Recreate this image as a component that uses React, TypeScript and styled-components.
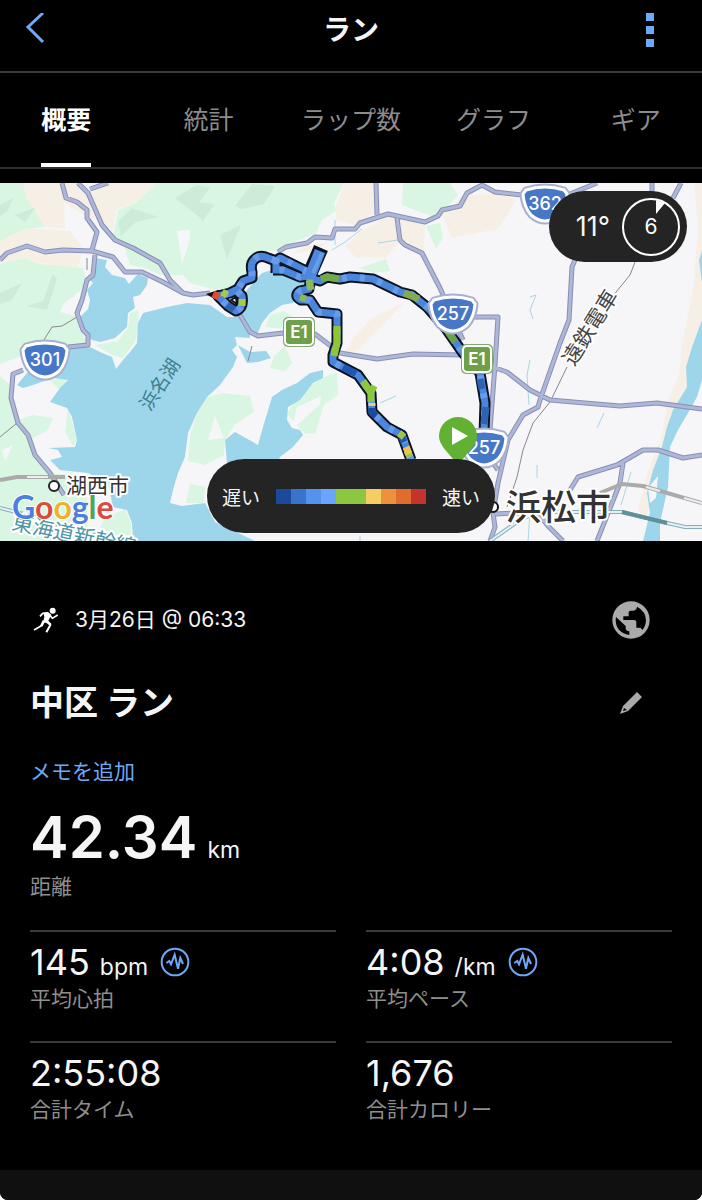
import React from "react";
import styled, { createGlobalStyle } from "styled-components";

const GlobalStyle = createGlobalStyle`
  * {
    box-sizing: border-box;
  }
  body {
    margin: 0;
    background: #fff;
    font-family: Inter, "Noto Sans CJK JP", sans-serif;
  }
  button {
    padding: 0;
    border: 0;
    background: none;
    color: inherit;
    font: inherit;
    cursor: pointer;
  }
`;

const Page = styled.div`
  display: flex;
  flex-direction: column;
  min-height: 100vh;
  overflow: hidden;
  border-radius: 0 0 8px 8px;
  background: #000;
  color: #f5f5f5;
`;

const Header = styled.header`
  display: grid;
  grid-template-columns: 1fr auto 1fr;
  align-items: center;
  height: 73px;
  padding: 0 47px 11px 25px;
  border-bottom: 2px solid #3b3b3b;
`;

const HeaderTitle = styled.h1`
  margin: 0;
  padding-left: 22px;
  font-size: 28px;
  font-weight: 700;
  line-height: 40px;
`;

const IconButton = styled.button`
  display: flex;
  color: ${(props) => props.color || "#6ea8f7"};
`;

const MenuButton = styled(IconButton)`
  justify-self: end;
`;

const Tabs = styled.nav`
  display: grid;
  grid-template-columns: repeat(5, 1fr);
  margin: 0 -5px;
  height: 96px;
  border-bottom: 2px solid #2f2f2f;
`;

const Tab = styled.button<{ $active?: boolean }>`
  && {
    justify-self: center;
    border-top: 4px solid transparent;
    border-bottom: 4px solid ${(props) => (props.$active ? "#fff" : "transparent")};
    color: ${(props) => (props.$active ? "#fff" : "#8c8c8c")};
    font-size: 25px;
    font-weight: ${(props) => (props.$active ? 700 : 400)};
    line-height: 36px;
    white-space: nowrap;
  }
`;

const MapPanel = styled.section`
  position: relative;
  margin-top: 14px;
  overflow: hidden;
  background: #f6f6f8;
`;

const MapSvg = styled.svg`
  display: block;
  width: 100%;
  height: auto;
`;

const Weather = styled.div`
  position: absolute;
  top: 8px;
  right: 15px;
  display: flex;
  align-items: center;
  justify-content: flex-end;
  gap: 11px;
  width: 138px;
  height: 71px;
  padding-right: 6px;
  border-radius: 36px;
  background: #242424;
  font-size: 27px;
`;

const Legend = styled.div`
  position: absolute;
  bottom: 8px;
  left: 50%;
  display: flex;
  align-items: center;
  justify-content: center;
  gap: 16px;
  width: 288px;
  height: 74px;
  border-radius: 37px;
  background: #242424;
  font-size: 19px;
  transform: translateX(-50%);
`;

const Scale = styled.div`
  display: flex;
`;

const Swatch = styled.span<{ $color: string }>`
  width: 15px;
  height: 15px;
  background: ${(props) => props.$color};
`;

const Summary = styled.main`
  flex: 1;
  padding: 56px 30px 0;
`;

const Row = styled.div`
  display: flex;
  align-items: center;
  justify-content: space-between;
  padding-right: 18px;
`;

const TitleRow = styled(Row)`
  margin-top: 36px;
  padding-right: 29px;
`;

const ActivityDate = styled.div`
  display: flex;
  align-items: center;
  gap: 16px;
  padding-left: 3px;
  font-size: 21px;
  line-height: 30px;
`;

const ActivityName = styled.h2`
  margin: 0;
  font-size: 34px;
  font-weight: 700;
  line-height: 48px;
`;

const MemoLink = styled.a`
  display: block;
  margin-top: 29px;
  color: #6ea8f7;
  font-size: 21px;
  line-height: 32px;
  text-decoration: none;
`;

const Distance = styled.div`
  height: 142px;
  padding-top: 14px;
`;

const DistanceValue = styled.div`
  font-size: 58px;
  font-weight: 600;
  line-height: 70px;
`;

const Unit = styled.span`
  margin-left: 10px;
  font-size: 23px;
  font-weight: 400;
  line-height: 1;
`;

const Label = styled.div`
  color: #8e8e8e;
  font-size: 21px;
  line-height: 30px;
`;

const Stats = styled.div`
  display: grid;
  grid-template-columns: 1fr 1fr;
  column-gap: 30px;
`;

const Stat = styled.div`
  height: 111px;
  padding-top: 8px;
  border-top: 2px solid #3b3b3b;
`;

const StatValue = styled.div`
  display: flex;
  align-items: center;
  gap: 12px;
  font-size: 36px;
  line-height: 44px;
`;

const Footer = styled.footer`
  height: 30px;
  background: #101010;
`;

const legendColors = [
  "#1b4a9c",
  "#3873cc",
  "#5393ef",
  "#69a5fa",
  "#8dc63f",
  "#8dc63f",
  "#f4cd63",
  "#ee913d",
  "#e06d2e",
  "#c6322d",
];

const tabs = ["概要", "統計", "ラップ数", "グラフ", "ギア"];

const stats = [
  { value: "145", unit: "bpm", label: "平均心拍", pulse: true },
  { value: "4:08", unit: "/km", label: "平均ペース", pulse: true },
  { value: "2:55:08", label: "合計タイム" },
  { value: "1,676", label: "合計カロリー" },
];

const greens = [
  "M0 183H23L27 200 45 227 25 229 8 237 0 242Z",
  "M0 264 25 258 40 264 83 268 86 282 78 294 64 303 60 312 76 316 82 332 88 346 60 350 40 349 0 364Z",
  "M157 183H344L334 203 336 211 322 220 316 233 290 244 278 250 258 252 250 262 247 277 236 288 215 290 190 283 183 275 160 275 145 268 130 265 125 248 113 237 118 210 135 203Z",
  "M130 313 138 310 139 323 135 342 123 358 112 355 95 345 118 341 128 328Z",
  "M403 183H450L458 195 445 210 436 218 402 205Z",
  "M426 226 440 223 443 238 436 249Z",
  "M0 376 10 385 12 400 18 420 33 415 53 418 47 431 33 438 38 460 56 474 86 475 88 541H0Z",
  "M50 380 68 378 60 391Z",
  "M68 408 77 440 73 446 65 432Z",
  "M125 509 131 523V541H94L105 518Z",
  "M207 397 223 393 250 396 254 412 235 424 225 440 224 455 205 465 188 461 190 436 198 411Z",
  "M287 414 300 393 322 378 337 372 338 395 324 405 315 434 304 433Z",
  "M270 315 284 311 300 322 287 329 265 327Z",
  "M274 356 285 346 292 363 285 371 270 368Z",
  "M360 268 386 259 390 271 374 273Z",
  "M190 484 205 487 204 503H186Z",
  "M134 533 153 532 150 541H134Z",
];

const shades = [
  "M0 205 13 198 8 211 0 216Z",
  "M15 215 36 207 25 222Z",
  "M118 222 132 208 158 217 136 222 121 236Z",
  "M175 198 197 185 210 188 199 202 215 204 203 220Z",
  "M235 206 252 184 275 186 264 204 242 209Z",
  "M220 235 241 225 227 259Z",
  "M195 210 208 203 203 222Z",
  "M0 293 22 283 12 300 0 304Z",
  "M26 306 43 301 53 274 57 279 47 310Z",
];

const beiges = [
  "M22 183H78L88 195 95 219 84 215 64 203 65 229 43 226 27 202Z",
  "M0 242 25 228 70 231 83 248 78 268 40 263 25 258 0 264Z",
  "M100 183H157L134 203 117 209 113 230 102 224 91 193Z",
  "M344 183 375 183 374 213 355 225 336 220 336 206Z",
  "M304 247 330 242 312 250 290 255Z",
  "M360 232 388 216 425 225 424 251 400 242 386 257 356 258 345 246Z",
  "M442 215 465 195 493 194 517 199 498 229 452 238Z",
  "M372 318 405 302 358 350 344 355 353 338Z",
  "M702 183 703 360 680 405 665 440 656 486 645 520 638 510 648 470 661 440 668 400 679 375 682 345 693 290 698 230 694 183Z",
];

const waters = [
  "M95 258 107 260 105 267 112 275 125 278 129 284 138 274 148 278 147 285 140 295 133 297 135 308 128 313 127 327 115 338 100 342 92 340 87 335 82 325 80 313 88 308 90 300 87 290 93 283 90 280Z",
  "M66 349 90 347 100 352 112 357 116 369 123 360 130 352 137 343 138 323 143 313 167 307 187 303 210 305 227 317 240 317 250 332 250 338 235 337 237 345 232 350 237 357 233 367 220 385 207 397 197 413 188 433 185 457 178 473 173 490 170 503 182 506 205 503 215 522 255 541H133L132 523 127 510 113 507 108 482 88 473 60 470 50 460 62 457 58 450 48 448 75 447 77 440 72 417 67 408 50 402 60 388 68 380 53 378 33 385 23 388 17 385 27 373Z",
  "M253 283 262 273 272 270 300 280 309 281 297 293 293 303 282 305 270 313 262 323 257 335 250 332 243 320 243 295Z",
  "M238 345 250 352 266 351 271 358 258 362 247 363Z",
  "M323 370V378L313 383 300 400 288 407 287 420 292 428 300 430 303 435 293 447 280 457 272 475H228L225 440 235 432 258 445 263 427 272 397 282 390 297 383 310 373Z",
  "M703 247 699 260 703 290ZM702 320 692 347 686 367 687 387 673 410 667 427 662 447 653 470 647 493 650 513 643 541H660V523L668 487 670 447 678 430 688 413 697 397 702 380Z",
];

const whites = [
  "M177 231 190 230 190 240 182 263Z",
  "M113 263 122 259 132 273 126 277 116 271Z",
  "M78 292 90 300 88 309 80 317 62 310Z",
  "M648 488 658 476 656 498 650 503Z",
  "M297 407 321 396 320 404 302 421 292 428Z",
  "M208 440 215 416 224 438Z",
  "M2 450 13 445 5 461Z",
];

const roads = [
  "M0 260 7 253 27 246 45 252 63 250 92 251 113 257 125 272 142 272 163 282 183 293 193 295 210 293",
  "M78 183 88 193 102 225 115 240 133 248 160 263 170 280 183 293",
  "M90 189 108 183",
  "M62 183 66 198 77 202 87 210V218L97 232 92 250",
  "M95 255 93 275 87 280 82 300 77 313 83 330 88 335V345L68 347",
  "M23 370 13 374 11 398 18 423 28 435 35 455 50 473 64 495",
  "M278 252 286 247 307 243 315 237 332 238 335 229H355L360 223 388 214 425 222 438 216 442 210 460 206 467 193 482 185 495 192 522 195",
  "M376 183 377 215",
  "M397 218 400 240 405 245 422 253 440 288 463 340",
  "M240 315 250 332 258 336 283 333 315 334 340 353 377 359 413 354 463 355",
  "M470 317H498L495 365 490 430 493 463 498 470",
  "M575 260 572 267 569 320 560 343 540 400 538 407 523 415 508 440 498 483 493 513 495 527 490 541",
  "M487 365 507 372 530 390 550 400 620 406 657 403 702 409",
  "M570 490 578 477 617 465 643 450H658L683 458 702 455",
  "M623 463 620 483 597 541",
  "M652 183V200M681 183 673 198M597 183 570 194",
  "M495 514 537 512 548 526 563 541",
];

const rails = [
  "M77 317 62 326 52 327 42 343",
  "M635 262 630 275 612 297",
  "M567 367 550 402 533 423 523 450 517 477 507 507",
  "M87 258 87 270M0 437 17 423M252 346 248 361",
];

const streams = [
  "M335 220V245M332 250 345 242 362 229M378 243 398 240M380 403 396 396M530 297 536 295 530 310 533 319M530 360 527 375 529 405M604 413 597 428M537 465V478M631 472 621 505M360 536V541M530 512 528 541",
];

const routePath =
  "M484 434 485 403 480 373 463 353 447 330 427 307 412 295 400 292 373 279 350 277 340 279 327 277 320 281 310 278M411 460 402 435 387 427 372 412 371 393 363 382 358 375 333 362 333 355 337 343V314L318 312 310 300 301 300Q293 296 300 291L309 289 311 276 300 277 283 270 273 270M308 272 280 258 276 261 268 258Q259 254 254 260 250 264 252 272V278L243 281 238 289 230 293 218 296 228 306 236 311Q244 308 242 296L236 290M276 258V273";

const routeParts = [
  { d: "M339 279 327 277 321 279", color: "#72aa4a" },
  { d: "M419 299 404 293", color: "#80ab4f" },
  { d: "M455 342 447 330", color: "#6aa04f" },
  { d: "M311 290 309 280M300 297 306 299", color: "#8bb85a" },
  { d: "M337 326V343L334 356", color: "#92c534" },
  { d: "M363 381 371 393V402", color: "#8dc63f" },
  { d: "M372 403V406", color: "#f4cd63" },
  { d: "M372 408V413L376 416", color: "#194a9e" },
  { d: "M356 374 343 367M401 435 404 442", color: "#2056b0" },
  { d: "M399 433 404 437M410 457 407 451", color: "#9fc549" },
  { d: "M409 454 406 447", color: "#eac556" },
  { d: "M242 306 242 299M222 292 227 295", color: "#a5cd3f" },
  { d: "M213 294 219 297", color: "#df4c2e" },
  { d: "M227 305 234 310M486 407 484 424M480 379 482 389", color: "#2e63b4" },
];

function Shield({ x, y, label }: { x: number; y: number; label: string }) {
  const shape =
    "M-19 -14 Q0 -20 19 -14 L22 -10 Q21 3 14 11 Q7 17 0 17 Q-7 17 -14 11 Q-21 3 -22 -10Z";
  return (
    <g transform={`translate(${x} ${y})`} strokeLinejoin="round">
      <path d={shape} fill="#a8b0d0" stroke="#a8b0d0" strokeWidth="7" />
      <path d={shape} fill="#4778c7" stroke="#fff" strokeWidth="3" />
      <text y="6" textAnchor="middle" fill="#fff" fontSize="18" fontWeight="500">
        {label}
      </text>
    </g>
  );
}

function Expressway({ x, y }: { x: number; y: number }) {
  return (
    <g transform={`translate(${x} ${y})`}>
      <rect x="-16" y="-15" width="32" height="30" rx="5" fill="#86a973" />
      <rect x="-14" y="-13" width="28" height="26" rx="4" fill="#6f9f48" stroke="#fff" strokeWidth="2" />
      <text y="6" textAnchor="middle" fill="#fff" fontSize="17" fontWeight="600">
        E1
      </text>
    </g>
  );
}

function CourseMap() {
  return (
    <MapSvg viewBox="0 183 702 358" role="img" aria-label="コースマップ">
      <path d={beiges.join("")} fill="#f6efe6" />
      <path d={greens.join("")} fill="#d9f6e2" />
      <path d={shades.join("")} fill="#cdecd8" />
      <path d={waters.join("")} fill="#9dd6ea" />
      <path d={whites.join("")} fill="#f6f6f8" />
      <path d={streams.join("")} fill="none" stroke="#a8d6e6" strokeWidth="1" />
      <path d={rails.join("")} fill="none" stroke="#888" strokeWidth="1" />
      <g fill="none" strokeLinejoin="round">
        <path d={roads.join("")} stroke="#888fb8" strokeWidth="5" />
        <path d={roads.join("")} stroke="#aeb7d6" strokeWidth="3" />
        <path d="M0 480 17 477H65M600 493 622 484 643 486 702 503" stroke="#aaa" strokeWidth="4" />
        <path d="M27 477H48M646 487 660 491M684 498 702 503" stroke="#eee" strokeWidth="2" />
        <path d="M490 541 520 520 537 512H622L667 523 685 527H702M0 508 20 513 60 525 120 541" stroke="#86aeb9" strokeWidth="4" />
        <path d="M490 541 520 520 537 512H622M667 523 685 527H702M0 508 20 513" stroke="#e0f2f5" strokeWidth="2" />
        <path d="M622 512 667 523" stroke="#5d9299" strokeWidth="4" />
      </g>

      <g fill="none" strokeLinejoin="round">
        <path d="M206 294 218 290 228 294 221 303Z" fill="#111" />
        <path d={routePath} stroke="#0c1220" strokeWidth="11" />
        <path d="M308 278 321 248" stroke="#0c1220" strokeWidth="15" />
        <path d={routePath} stroke="#4b86dd" strokeWidth="7" />
        <path d={routePath} stroke="#669ce9" strokeWidth="7" strokeDasharray="5 13" />
        <path d="M309 279 320 251" stroke="#4e88dd" strokeWidth="11" />
        <path d="M313 273 322 253" stroke="#669ce9" strokeWidth="4" />
        {routeParts.map((part) => (
          <path key={part.d} d={part.d} stroke={part.color} strokeWidth="7" />
        ))}
        <path d="M280 263 302 273" stroke="#0c1220" strokeWidth="2" />
        <path d="M370 387 376 390" stroke="#8dc63f" strokeWidth="6" />
        <path d="M231 300 236 297 237 304Z" fill="#e8f2dc" stroke="#0c1220" strokeWidth="2" />
      </g>

      <Shield x={45} y={360} label="301" />
      <Shield x={453} y={314} label="257" />
      <Shield x={545} y={204} label="362" />
      <Shield x={484} y={448} label="257" />
      <Expressway x={299} y={332} />
      <Expressway x={477} y={359} />

      <g stroke="#fff" strokeWidth="4" strokeLinejoin="round" paintOrder="stroke">
        <text transform="translate(150 412) rotate(-57)" fill="#40808f" stroke="none" fontSize="19">
          浜名湖
        </text>
        <text transform="translate(574 367) rotate(-58)" fill="#444" fontSize="21">
          遠鉄電車
        </text>
        <text x="66" y="493" fill="#333" fontSize="21">
          湖西市
        </text>
        <text x="506" y="520" fill="#333" fontSize="35" fontWeight="500">
          浜松市
        </text>
        <text transform="translate(11 529) rotate(12)" fill="#4f94a4" fontSize="21">
          東海道新幹線
        </text>
        <text x="12" y="519" fontFamily="Lato, sans-serif" fontSize="32" fontWeight="700" strokeWidth="2">
          <tspan fill="#4f7fdc">G</tspan>
          <tspan fill="#d94c3e">o</tspan>
          <tspan fill="#ecb22e">o</tspan>
          <tspan fill="#4f7fdc">g</tspan>
          <tspan fill="#4ba65a">l</tspan>
          <tspan fill="#d94c3e">e</tspan>
        </text>
      </g>
      <circle cx="54" cy="486" r="5" fill="#fff" stroke="#222" strokeWidth="2" />
      <circle cx="493" cy="507" r="5" fill="#fff" stroke="#111" strokeWidth="2" />

      <path d="M458 417A19 19 0 0 1 477 436C477 447 464 455 458 466C452 455 439 447 439 436A19 19 0 0 1 458 417Z" fill="#62b132" />
      <path d="M452 427 468 436 452 445Z" fill="#fff" />
    </MapSvg>
  );
}

function RunnerIcon() {
  return (
    <svg width="26" height="26" viewBox="98 49 78 78" fill="none" stroke="#fff" strokeLinejoin="round" aria-hidden="true">
      <circle cx="157" cy="60" r="9" fill="#fff" stroke="none" />
      <path d="M130 66 143 64 153 72 144 90 153 99 151 106 138 97 128 95 132 80Z" fill="#fff" stroke="none" />
      <path d="M119 77 127 68 142 67M148 73 156 83 172 73" strokeWidth="5" />
      <path d="M131 90 123 106" strokeWidth="8" />
      <path d="M127 103 101 118" strokeWidth="5" />
      <path d="M143 94 150 103 138 125" strokeWidth="6" />
    </svg>
  );
}

function GlobeIcon() {
  return (
    <svg width="46" height="46" viewBox="774 20 138 136" fill="#000" aria-hidden="true">
      <circle cx="843" cy="88" r="56" fill="currentColor" />
      <path d="M861 48Q888 62 888 90 886 108 877 118L872 111H859V95Q859 88 851 88H820V77H836V65Q836 60 842 60H850Q860 58 861 48Z" />
      <path d="M798 79 827 106V112Q827 121 838 122V133Q798 126 797 88Z" />
    </svg>
  );
}

function PulseIcon() {
  return (
    <svg width="30" height="30" viewBox="480 79 90 90" fill="none" stroke="#6ea8f7" aria-hidden="true">
      <circle cx="525" cy="124" r="40" strokeWidth="6" />
      <path d="M499 127 508 121 513 131 524 102 534 144 541 112 549 130" strokeWidth="6" />
    </svg>
  );
}

function App() {
  return (
    <>
      <GlobalStyle />
      <Page>
        <Header>
          <IconButton aria-label="戻る">
            <svg width="22" height="34" viewBox="0 0 22 34" fill="none">
              <path d="M18 0 3 14 18 29" stroke="currentColor" strokeWidth="3" />
            </svg>
          </IconButton>
          <HeaderTitle>ラン</HeaderTitle>
          <MenuButton aria-label="メニュー">
            <svg width="10" height="34" viewBox="0 0 10 34" fill="currentColor">
              <path d="M1 0H9V8H1ZM1 13H9V21H1ZM1 26H9V34H1Z" />
            </svg>
          </MenuButton>
        </Header>

        <Tabs>
          {tabs.map((tab, index) => (
            <Tab key={tab} $active={index === 0}>
              {tab}
            </Tab>
          ))}
        </Tabs>

        <MapPanel>
          <CourseMap />
          <Weather>
            11°
            <svg width="60" height="60" viewBox="0 0 60 60">
              <circle cx="30" cy="30" r="28" fill="none" stroke="#fff" strokeWidth="2" />
              <path d="M35 3 44 6 35 17Z" fill="#fff" />
              <text x="30" y="37" textAnchor="middle" fill="#fff" fontSize="21">
                6
              </text>
            </svg>
          </Weather>
          <Legend>
            遅い
            <Scale>
              {legendColors.map((color, index) => (
                <Swatch key={index} $color={color} />
              ))}
            </Scale>
            速い
          </Legend>
        </MapPanel>

        <Summary>
          <Row>
            <ActivityDate>
              <RunnerIcon />
              3月26日 @ 06:33
            </ActivityDate>
            <IconButton color="#aaa" aria-label="公開設定">
              <GlobeIcon />
            </IconButton>
          </Row>
          <TitleRow>
            <ActivityName>中区 ラン</ActivityName>
            <IconButton color="#aaa" aria-label="名前を編集">
              <svg width="24" height="24" viewBox="0 0 24 24" fill="currentColor">
                <path fillRule="evenodd" d="M18 1 23 6 9 20 1 23 4 15ZM5 17 4 20 8 19Z" />
              </svg>
            </IconButton>
          </TitleRow>
          <MemoLink href="#memo">メモを追加</MemoLink>
          <Distance>
            <DistanceValue>
              42.34
              <Unit>km</Unit>
            </DistanceValue>
            <Label>距離</Label>
          </Distance>
          <Stats>
            {stats.map((stat) => (
              <Stat key={stat.label}>
                <StatValue>
                  <span>
                    {stat.value}
                    {stat.unit && <Unit>{stat.unit}</Unit>}
                  </span>
                  {stat.pulse && <PulseIcon />}
                </StatValue>
                <Label>{stat.label}</Label>
              </Stat>
            ))}
          </Stats>
        </Summary>
        <Footer />
      </Page>
    </>
  );
}

export default App;
